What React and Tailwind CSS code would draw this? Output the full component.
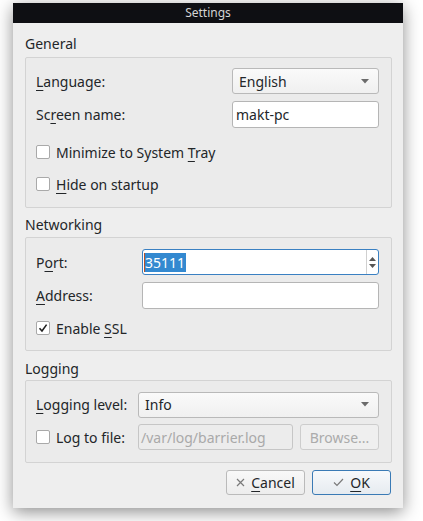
import React from "react"

const font = { fontFamily: '"Noto Sans", "Open Sans", sans-serif' }

function U({ children }) {
  return <span className="underline underline-offset-[3px] decoration-1">{children}</span>
}

function CheckBox({ checked }) {
  return (
    <span className="flex h-[14px] w-[14px] shrink-0 items-center justify-center rounded-[2px] border border-[#a9a9a9] bg-white">
      {checked && (
        <svg width="10" height="10" viewBox="0 0 10 10">
          <path d="M1.5 5.2 L4 8 L8.6 1.6" fill="none" stroke="#1f1f1f" strokeWidth="1.6" />
        </svg>
      )}
    </span>
  )
}

function Combo({ value, className = "" }) {
  return (
    <div className={`flex items-center justify-between rounded-[3px] border border-[#b9b9b9] bg-gradient-to-b from-[#fafafa] to-[#f0f0f0] pl-[6px] pr-[9px] ${className}`}>
      <span>{value}</span>
      <svg width="8" height="5" viewBox="0 0 8 5">
        <path d="M0 0 L8 0 L4 4.5 Z" fill="#6b6b6b" />
      </svg>
    </div>
  )
}

function Field({ value, className = "" }) {
  return (
    <div className={`flex items-center rounded-[3px] border border-[#b5b5b5] bg-white pl-[3px] ${className}`}>
      {value}
    </div>
  )
}

function Group({ title, children, className = "" }) {
  return (
    <>
      <div className="h-5 leading-5">{title}</div>
      <div className={`rounded-[2px] border border-[#d3d3d3] bg-[#ebebeb] pl-[10px] pr-[12px] ${className}`}>{children}</div>
    </>
  )
}

export default function App() {
  return (
    <div className="min-h-[521px] bg-white pl-[13px] pt-[3px]" style={font}>
      <div className="flex h-[505px] w-[390px] flex-col bg-[#eeeeee] text-[14px] text-[#232629] shadow-[0_4px_16px_rgba(0,0,0,0.45)]">
        <div className="flex h-5 items-center justify-center bg-[#0e0f13] text-[12px] text-[#d4d4d4]">Settings</div>

        <div className="flex flex-col pl-3 pr-[11px] pt-[11px]">
          <Group title="General" className="mt-[3px] pt-[10px] pb-[13px]">
            <div className="flex h-[26px] items-center">
              <span className="w-[196px]"><U>L</U>anguage:</span>
              <Combo value="English" className="h-[26px] flex-1" />
            </div>
            <div className="mt-[7px] flex h-[27px] items-center">
              <span className="w-[196px]">Sc<U>r</U>een name:</span>
              <Field value="makt-pc" className="h-[27px] flex-1" />
            </div>
            <div className="mt-[14px] flex h-5 items-center gap-[6px]">
              <CheckBox />
              <span>Minimize to System <U>T</U>ray</span>
            </div>
            <div className="mt-3 flex h-5 items-center gap-[6px]">
              <CheckBox />
              <span><U>H</U>ide on startup</span>
            </div>
          </Group>

          <div className="mt-[7px]" />
          <Group title="Networking" className="mt-[2px] pt-[11px] pb-[12px]">
            <div className="flex h-[26px] items-center">
              <span className="w-[106px]">P<U>o</U>rt:</span>
              <div className="flex h-[26px] flex-1 items-stretch rounded-[3px] border border-[#3a80c2] bg-white">
                <div className="flex flex-1 items-center pl-[1px]">
                  <span className="h-[19px] w-[1px] bg-[#b5502a]" />
                  <span className="bg-[#3389d0] pr-[1px] leading-[19px] text-white">35111</span>
                </div>
                <div className="flex w-[12px] flex-col items-center justify-center gap-[3px] border-l border-[#d0d0d0]">
                  <svg width="7" height="4" viewBox="0 0 7 4"><path d="M0 4 L7 4 L3.5 0 Z" fill="#555" /></svg>
                  <svg width="7" height="4" viewBox="0 0 7 4"><path d="M0 0 L7 0 L3.5 4 Z" fill="#555" /></svg>
                </div>
              </div>
            </div>
            <div className="mt-[7px] flex h-[27px] items-center">
              <span className="w-[106px]"><U>A</U>ddress:</span>
              <Field value="" className="h-[27px] flex-1" />
            </div>
            <div className="mt-[9px] flex h-5 items-center gap-[6px]">
              <CheckBox checked />
              <span>Enable <U>S</U>SL</span>
            </div>
          </Group>

          <div className="mt-[8px]" />
          <Group title="Logging" className="mt-[1px] pt-[11px] pb-[12px]">
            <div className="flex h-[25px] items-center">
              <span className="w-[102px]"><U>L</U>ogging level:</span>
              <Combo value="Info" className="h-[26px] flex-1" />
            </div>
            <div className="mt-[7px] flex h-[26px] items-center">
              <div className="flex w-[102px] items-center gap-[6px]">
                <CheckBox />
                <span>Log to file:</span>
              </div>
              <div className="flex h-[26px] w-[155px] items-center rounded-[3px] border border-[#c6c6c6] bg-[#ececec] pl-[2px] text-[#a9a9a9]">
                /var/log/barrier.log
              </div>
              <div className="ml-[7px] flex h-[26px] flex-1 items-center justify-center rounded-[3px] border border-[#cdcdcd] bg-[#efefef] text-[#ababab]">
                Browse...
              </div>
            </div>
          </Group>

          <div className="mt-[7px] flex justify-end gap-[7px] pr-[1px]">
            <div className="flex h-[25px] w-[79px] items-center justify-center gap-[6px] rounded-[3px] border border-[#bababa] bg-gradient-to-b from-[#f8f8f8] to-[#ededed]">
              <svg width="9" height="9" viewBox="0 0 9 9"><path d="M1 1 L8 8 M8 1 L1 8" stroke="#7a7a7a" strokeWidth="1.2" /></svg>
              <span><U>C</U>ancel</span>
            </div>
            <div className="flex h-[25px] w-[79px] items-center justify-center gap-[6px] rounded-[3px] border border-[#3a7ab5] bg-gradient-to-b from-[#f7f9fb] to-[#e6ebf0]">
              <svg width="11" height="9" viewBox="0 0 11 9"><path d="M1 4.5 L4 7.5 L10 1" fill="none" stroke="#7a7a7a" strokeWidth="1.2" /></svg>
              <span><U>O</U>K</span>
            </div>
          </div>
        </div>
      </div>
    </div>
  )
}
